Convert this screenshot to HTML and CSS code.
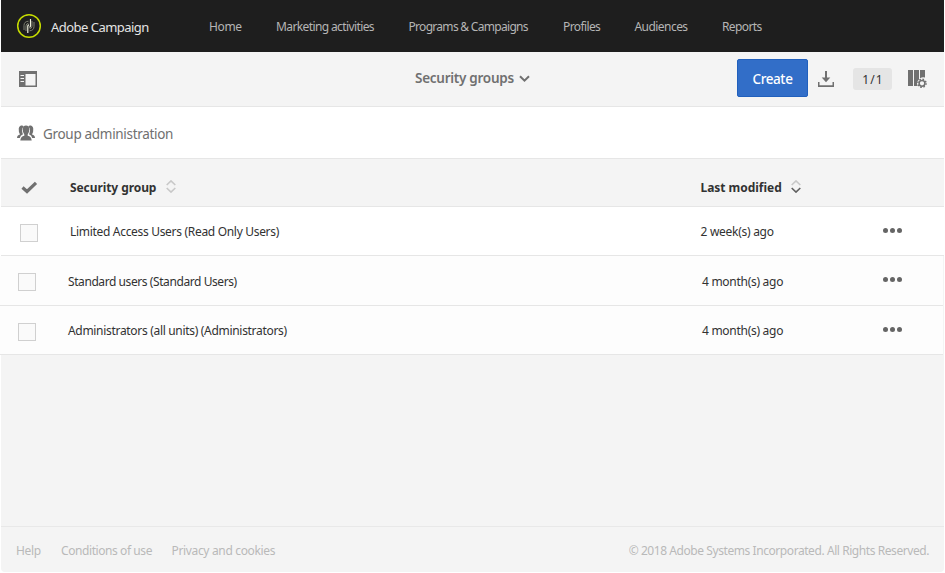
FILE: index.html
```html
<!DOCTYPE html>
<html lang="en">
<head>
<meta charset="utf-8">
<title>Adobe Campaign - Security groups</title>
<link rel="stylesheet" href="styles.css">
</head>
<body>
<div class="app">
  <header class="topbar">
    <svg class="logo" width="26" height="26" viewBox="0 0 26 26" fill="none">
      <circle cx="13" cy="13" r="11.300" stroke="#c6dc00" stroke-width="1.500"/>
      <path d="M8 17V12.500q0-4 4.500-4.300M10 18V12.800q0-2.200 2.500-2.600M18 9V13.500q0 4-4.500 4.300M16 8V13.200q0 2.200-2.500 2.600" stroke="#7d7f70" stroke-width="1"/>
      <path d="M11.800 20V13q0-1.200 1.200-1.200M14.500 6V13q0 1.200-1.200 1.200" stroke="#f0f1dd" stroke-width="1.200"/>
    </svg>
    <span class="brand">Adobe Campaign</span>
    <nav class="nav">
      <a class="home">Home</a><a class="marketing">Marketing activities</a><a class="programs">Programs &amp; Campaigns</a><a class="profiles">Profiles</a><a class="audiences">Audiences</a><a class="reports">Reports</a>
    </nav>
  </header>
  <div class="toolbar">
    <svg class="panel-icon" width="18" height="16" viewBox="0 0 18 16">
      <path fill="#707070" fill-rule="evenodd" d="M0 0h18v16H0zM6.500 3v11.500h10V3zM1.500 4v1h3.500V4zM1.500 7v1h3.500V7zM1.500 10v1h3.500v-1z"/>
    </svg>
    <div class="title"><span>Security groups</span>
      <svg width="11" height="8" viewBox="0 0 11 8" fill="none" stroke="#707070" stroke-width="2"><path d="M1 1.200l4.500 4.500L10 1.200"/></svg>
    </div>
    <div class="tools">
      <button class="create">Create</button>
      <svg class="download" width="16" height="16" viewBox="0 0 16 16" fill="#707070"><path d="M7 0h2v6.500h3.300L8 11.300 3.700 6.500H7zM0 11h1.500v3.300h13V11H16v5H0z"/></svg>
      <span class="count">1 / 1</span>
      <svg class="columns" width="19" height="18" viewBox="0 0 19 18">
        <path fill="#707070" d="M0 0h5v16H0zM6 0h5v9.500Q9 11 9 13.500q0 1.500.7 2.500H6zM12 0h5v7.600q-2.500-1-5 .7z"/>
        <circle cx="14" cy="13.300" r="2.900" fill="none" stroke="#707070" stroke-width="1.500"/>
        <circle cx="14" cy="13.300" r="4.100" fill="none" stroke="#707070" stroke-width="1.400" stroke-dasharray="1.600 1.620"/>
      </svg>
    </div>
  </div>
  <div class="section">
    <svg width="18" height="16" viewBox="0 0 18 16" fill="#707070">
      <path d="M4 .5Q6 0 6.700 1.500 5 3 5 5.500q.3 2.500 1 3.700-2.800 1-3.200 3.800H0q0-2.800 3-3.500Q1.500 7.500 1.800 5 1.300 1.500 4 .5z"/>
      <path d="M14 .5Q12 0 11.300 1.500 13 3 13 5.500q-.3 2.500-1 3.700 2.800 1 3.200 3.800H18q0-2.800-3-3.500Q16.500 7.500 16.200 5q.5-3.500-2.200-4.500z"/>
      <path d="M9 .5q3.300 0 3.300 4 0 3-1.600 5v1.200q3.700.7 4 4.800H3.300q.3-4.100 4-4.800V9.500q-1.600-2-1.600-5 0-4 3.300-4z"/>
    </svg>
    <span>Group administration</span>
  </div>
  <div class="table">
    <div class="row head">
      <svg class="check" width="17" height="13" viewBox="0 0 17 13" fill="none"><path d="M1.500 6.500l4.500 4L15 1.800" stroke="#707070" stroke-width="3.200"/></svg>
      <div class="name">Security group
        <svg class="sort" width="10" height="13" viewBox="0 0 10 13" fill="none" stroke-width="1.600"><path d="M.7 5L5 .9 9.300 5" stroke="#c8c8c8"/><path d="M.7 8L5 12.100 9.300 8" stroke="#c8c8c8"/></svg>
      </div>
      <div class="modified">Last modified
        <svg class="sort" width="10" height="13" viewBox="0 0 10 13" fill="none" stroke-width="1.600"><path d="M.7 5L5 .9 9.300 5" stroke="#c8c8c8"/><path d="M.7 8L5 12.100 9.300 8" stroke="#606060"/></svg>
      </div>
    </div>
    <div class="row">
      <span class="box"></span>
      <div class="name">Limited Access Users (Read Only Users)</div>
      <div class="modified">2 week(s) ago</div>
      <div class="dots"><i></i><i></i><i></i></div>
    </div>
    <div class="row shifted tall">
      <span class="box"></span>
      <div class="name tight">Standard users (Standard Users)</div>
      <div class="modified">4 month(s) ago</div>
      <div class="dots"><i></i><i></i><i></i></div>
    </div>
    <div class="row shifted">
      <span class="box"></span>
      <div class="name">Administrators (all units) (Administrators)</div>
      <div class="modified">4 month(s) ago</div>
      <div class="dots"><i></i><i></i><i></i></div>
    </div>
  </div>
  <footer class="footer">
    <a class="help">Help</a><a class="conditions">Conditions of use</a><a class="privacy">Privacy and cookies</a>
    <span class="copyright">© 2018 Adobe Systems Incorporated. All Rights Reserved.</span>
  </footer>
</div>
</body>
</html>
```
FILE: styles.css
```css
* { box-sizing: border-box; }
body { margin: 0; background: #fff; font: 12px/18px "Noto Sans", sans-serif; color: #323232; }
svg { display: block; flex: none; }
.app { display: flex; flex-direction: column; width: 943px; height: 572px; margin-left: 1px; background: #f4f4f4; border-radius: 0 0 4px 4px; white-space: nowrap; }

.topbar { display: flex; align-items: center; height: 52px; padding-left: 15px; background: #1e1e1e; }
.brand { width: 158px; margin-left: 9px; padding-top: 1px; font-size: 13px; letter-spacing: -.53px; color: #e4e4e4; }
.nav { display: grid; grid-template-columns: 67px 132.500px 154.500px 71.500px 87.500px 60px; padding-top: 2px; color: #b5b5b5; }
.home { letter-spacing: -.35px; }
.marketing { letter-spacing: -.61px; }
.programs { letter-spacing: -.7px; }
.profiles, .reports { letter-spacing: -.6px; }
.audiences { letter-spacing: -.55px; }

.toolbar { display: grid; grid-template-columns: 414px 322px 207px; align-items: center; height: 55px; border-bottom: 1px solid #e6e6e6; }
.panel-icon { margin-left: 18px; }
.title { display: flex; align-items: center; gap: 5px; margin-top: -2px; font-size: 13.500px; font-weight: 600; letter-spacing: -.27px; color: #707070; }
.title svg { margin-top: 2px; }
.tools { display: flex; align-items: center; }
.create { width: 71px; height: 38px; margin-top: -2px; padding: 2px 0 0; border: 1px solid #2160bd; border-radius: 2px; background: #326ec8; color: #fff; font: 500 13.500px "Noto Sans", sans-serif; letter-spacing: -.4px; }
.download { margin-left: 10px; }
.count { width: 39px; height: 22px; margin: 0 16px 0 19px; border-radius: 3px; background: #e5e5e5; text-align: center; line-height: 23px; word-spacing: -2px; }

.section { display: flex; align-items: center; gap: 8px; height: 52px; padding: 2px 0 0 16px; border-bottom: 1px solid #e6e6e6; background: #fff; font-size: 13.500px; letter-spacing: -.31px; color: #707070; }
.section svg { margin-top: -2px; }

.row { display: grid; grid-template-columns: 69px 630.500px 182.500px 20px; align-items: center; height: 49px; border-bottom: 1px solid #e6e6e6; background: #fff; letter-spacing: -.31px; }
.row.head { height: 48px; padding-top: 10px; background: #f4f4f4; font-weight: 700; letter-spacing: -.08px; }
.name, .modified { display: flex; align-items: center; padding-top: 2px; }
.head .name, .head .modified { padding-top: 0; }
.check { margin: -1px 0 0 20px; }
.sort { margin: -3px 0 0 9.500px; }
.box { width: 18px; height: 18px; margin: 3px 0 0 19px; border: 1px solid #d0d0d0; background: #fafafa; }
.row .tight { letter-spacing: -.42px; }
.modified { letter-spacing: -.28px; }
.head .modified { letter-spacing: -.03px; }
.dots { display: flex; gap: 2px; margin-bottom: 2px; }
.dots i { width: 5px; height: 5px; border-radius: 50%; background: #656565; }
.shifted { width: 943px; margin-left: -1px; grid-template-columns: 68px 634px 181px 20px; background: #fdfdfd; }
.shifted .box { margin: 3px 0 0 18px; }
.tall { height: 50px; }
.tall .dots { margin-bottom: 3px; }

.footer { display: flex; align-items: center; height: 46px; margin-top: auto; padding: 2px 15px 0; border-top: 1px solid #e8e8e8; color: #b9b9b9; }
.help { width: 45px; letter-spacing: -.3px; }
.conditions { width: 110.500px; letter-spacing: -.42px; }
.privacy { letter-spacing: -.34px; }
.copyright { margin-left: auto; letter-spacing: -.43px; }
```
